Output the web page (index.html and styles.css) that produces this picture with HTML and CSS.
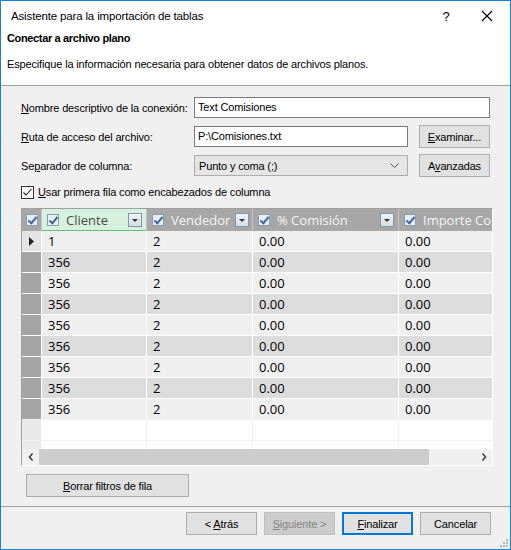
FILE: index.html
```html
<!DOCTYPE html>
<html lang="es">
<head>
    <meta charset="UTF-8">
    <title>Asistente para la importación de tablas</title>
    <link rel="stylesheet" href="styles.css">
</head>
<body>
    <div class="dialog">
        <div class="titlebar">
            <span class="title">Asistente para la importación de tablas</span>
            <span class="help">?</span>
            <span class="close">
                <svg width="12" height="12" viewBox="0 0 12 12"><path d="M1 1L11 11M11 1L1 11" stroke="#000" stroke-width="1.1"/></svg>
            </span>
        </div>
        <div class="header">
            <div class="step">Conectar a archivo plano</div>
            <div class="desc">Especifique la información necesaria para obtener datos de archivos planos.</div>
        </div>

        <div class="content">
            <div class="row">
                <label class="lbl"><u>N</u>ombre descriptivo de la conexión:</label>
                <div class="field wide">Text Comisiones</div>
            </div>
            <div class="row">
                <label class="lbl"><u>R</u>uta de acceso del archivo:</label>
                <div class="field">P:\Comisiones.txt</div>
                <button class="btn side"><u>E</u>xaminar...</button>
            </div>
            <div class="row">
                <label class="lbl">Se<u>p</u>arador de columna:</label>
                <div class="field select">
                    <span>Punto y coma (;)</span>
                    <svg width="9" height="6" viewBox="0 0 9 6"><path d="M0.5 0.5L4.5 4.5L8.5 0.5" fill="none" stroke="#555"/></svg>
                </div>
                <button class="btn side">A<u>v</u>anzadas</button>
            </div>
            <div class="check-row">
                <span class="check">
                    <svg width="13" height="13" viewBox="0 0 13 13"><rect x="0.5" y="0.5" width="12" height="12" fill="#fff" stroke="#333"/><path d="M2.5 6.5L5 9L10.5 3" fill="none" stroke="#222" stroke-width="1.1"/></svg>
                </span>
                <span><u>U</u>sar primera fila como encabezados de columna</span>
            </div>

            <div class="grid" id="grid">
                <div class="ghead">
                    <div class="corner"><span class="mini-check"></span></div>
                    <div class="col active"><span class="mini-check"></span><span class="name">Cliente</span><span class="drop"></span></div>
                    <div class="col"><span class="mini-check"></span><span class="name">Vendedor</span><span class="drop"></span></div>
                    <div class="col"><span class="mini-check"></span><span class="name">% Comisión</span><span class="drop"></span></div>
                    <div class="col last"><span class="mini-check"></span><span class="name">Importe Co</span></div>
                </div>
                <div class="gbody" id="rows"></div>
                <div class="hscroll">
                    <span class="arrow">
                        <svg width="6" height="8" viewBox="0 0 6 8"><path d="M4.5 0.5L1.5 4L4.5 7.5" fill="none" stroke="#333" stroke-width="1.4"/></svg>
                    </span>
                    <div class="track"><div class="thumb"></div></div>
                    <span class="arrow">
                        <svg width="6" height="8" viewBox="0 0 6 8"><path d="M1.5 0.5L4.5 4L1.5 7.5" fill="none" stroke="#333" stroke-width="1.4"/></svg>
                    </span>
                </div>
            </div>

            <button class="btn clear"><u>B</u>orrar filtros de fila</button>
        </div>

        <div class="footer">
            <button class="btn"><span>&lt; <u>A</u>trás</span></button>
            <button class="btn" disabled><u>S</u>iguiente &gt;</button>
            <button class="btn default"><u>F</u>inalizar</button>
            <button class="btn">Cancelar</button>
            <svg class="grip" width="8" height="8" viewBox="0 0 8 8">
                <rect x="6" y="0" width="2" height="2" fill="#b8b8b8"/>
                <rect x="3" y="3" width="2" height="2" fill="#b8b8b8"/>
                <rect x="6" y="3" width="2" height="2" fill="#b8b8b8"/>
                <rect x="0" y="6" width="2" height="2" fill="#b8b8b8"/>
                <rect x="3" y="6" width="2" height="2" fill="#b8b8b8"/>
                <rect x="6" y="6" width="2" height="2" fill="#b8b8b8"/>
            </svg>
        </div>
    </div>

    <script>
        // preview rows of the text file
        const data = [
            ['1', '2', '0.00', '0.00'],
            ['356', '2', '0.00', '0.00'],
            ['356', '2', '0.00', '0.00'],
            ['356', '2', '0.00', '0.00'],
            ['356', '2', '0.00', '0.00'],
            ['356', '2', '0.00', '0.00'],
            ['356', '2', '0.00', '0.00'],
            ['356', '2', '0.00', '0.00'],
            ['356', '2', '0.00', '0.00']
        ];

        const rows = document.getElementById('rows');
        data.forEach((r, i) => {
            const row = document.createElement('div');
            row.className = 'grow' + (i % 2 ? ' alt' : '');
            const head = document.createElement('div');
            head.className = 'rhead' + (i === 0 ? ' current' : '');
            if (i === 0) head.innerHTML = '<svg width="5" height="9" viewBox="0 0 5 9"><path d="M0 0L5 4.5L0 9Z" fill="#222"/></svg>';
            row.appendChild(head);
            r.forEach(v => {
                const cell = document.createElement('div');
                cell.className = 'cell';
                cell.textContent = v;
                row.appendChild(cell);
            });
            rows.appendChild(row);
        });

        // blank rows under the data
        for (let i = 0; i < 2; i++) {
            const row = document.createElement('div');
            row.className = 'grow empty';
            row.innerHTML = '<div class="rhead"></div><div class="cell"></div><div class="cell"></div><div class="cell"></div><div class="cell"></div>';
            rows.appendChild(row);
        }
    </script>
</body>
</html>
```

FILE: styles.css
```css
* {
    box-sizing: border-box;
}

body {
    margin: 0;
    font-family: 'Liberation Sans', Arial, sans-serif;
    font-size: 11px;
    letter-spacing: -0.15px;
    color: #000;
    background: #fff;
}

u {
    text-decoration: underline;
    text-underline-offset: 1px;
}

.dialog {
    width: 511px;
    height: 550px;
    border: 1px solid #1b7fd4;
    background: #f0f0f0;
    display: flex;
    flex-direction: column;
}

.titlebar {
    height: 29px;
    background: #fff;
    display: flex;
    align-items: center;
    padding-left: 10px;
    padding-top: 1px;
}

.title {
    flex: 1;
    font-size: 11.5px;
}

.help {
    width: 30px;
    text-align: center;
    font-size: 13px;
    margin-right: 3px;
}

.close {
    width: 46px;
    height: 28px;
    display: flex;
    align-items: center;
    justify-content: center;
}

.header {
    background: #fff;
    height: 56px;
    border-bottom: 1px solid #a0a0a0;
    padding: 2px 6px 0;
}

.step {
    font-weight: bold;
    letter-spacing: -0.35px;
}

.desc {
    margin-top: 14px;
    font-size: 11px;
}

.content {
    padding: 11px 19px 0 20px;
    flex: 1;
}

.row {
    display: flex;
    align-items: center;
    height: 21px;
    margin-bottom: 8px;
}

.lbl {
    width: 173px;
    flex: none;
    white-space: nowrap;
}

.field {
    height: 21px;
    width: 214px;
    border: 1px solid #7a7a7a;
    background: #fff;
    padding: 3px 3px;
    white-space: nowrap;
}

.field.wide {
    width: 296px;
}

.field.select {
    background: #e5e5e5;
    border-color: #adadad;
    display: flex;
    align-items: center;
    justify-content: space-between;
    padding: 0 8px 0 4px;
}

.btn {
    font-family: inherit;
    font-size: 11px;
    letter-spacing: -0.15px;
    height: 23px;
    width: 71px;
    padding: 0;
    background: #e1e1e1;
    border: 1px solid #adadad;
    color: #000;
}

.btn:disabled {
    background: #cccccc;
    border-color: #bfbfbf;
    color: #838383;
}

.btn.default {
    border: 2px solid #0078d7;
}

.btn.side {
    margin-left: 11px;
}

.check-row {
    display: flex;
    align-items: center;
    gap: 4px;
    height: 16px;
    margin-top: 1px;
}

.check {
    display: flex;
}

.grid {
    margin-top: 8px;
    width: 472px;
    height: 258px;
    border: 1px solid #a0a0a0;
    border-right-color: #fff;
    border-bottom-color: #fff;
    background: #fff;
    overflow: hidden;
    display: flex;
    flex-direction: column;
    font-family: 'Open Sans', 'DejaVu Sans', sans-serif;
    font-size: 13px;
    letter-spacing: 0;
}

.ghead {
    display: flex;
    height: 22px;
    background: #a7a7a7;
    flex: none;
}

.corner {
    width: 20px;
    display: flex;
    align-items: center;
    justify-content: center;
    border-right: 1px solid #c4c4c4;
    flex: none;
}

.col {
    display: flex;
    align-items: center;
    gap: 5px;
    padding: 0 4px 0 5px;
    color: #f4f4f4;
    border-right: 1px solid #c4c4c4;
    flex: none;
    white-space: nowrap;
    overflow: hidden;
}

.col:nth-child(2) { width: 105px; }
.col:nth-child(3) { width: 106px; }
.col:nth-child(4) { width: 146px; }
.col.last { width: 93px; border-right: none; padding-right: 0; }

.col.active {
    background: #d6f1de;
    color: #4a4a4a;
    border-bottom: 1px solid #5dc27e;
}

.col .name {
    flex: 1;
    padding-left: 2px;
}

.mini-check {
    width: 12px;
    height: 12px;
    border: 1px solid #8a9bb0;
    background: #e8eef6;
    position: relative;
    flex: none;
}

.mini-check::after {
    content: "";
    position: absolute;
    left: 3px;
    top: 0;
    width: 3px;
    height: 7px;
    border: solid #3f66a8;
    border-width: 0 2px 2px 0;
    transform: rotate(40deg);
}

.drop {
    width: 14px;
    height: 14px;
    border: 1px solid #8393a8;
    background: linear-gradient(#f1f4f8, #d6dde7);
    position: relative;
    flex: none;
}

.drop::after {
    content: "";
    position: absolute;
    left: 3px;
    top: 5px;
    border-left: 3px solid transparent;
    border-right: 3px solid transparent;
    border-top: 3px solid #333;
}

.gbody {
    flex: 1;
    overflow: hidden;
}

.grow {
    display: flex;
    height: 21px;
    background: #efefef;
    border-top: 1px solid #fff;
}

.grow:first-child {
    border-top: none;
    height: 20px;
}

.grow.alt {
    background: #dcdcdc;
}

.grow.empty {
    background: #fff;
    border-top-color: #f0f0f0;
}

.rhead {
    width: 20px;
    background: #a5a5a5;
    border-right: 1px solid #fff;
    flex: none;
}

.rhead.current {
    background: #e3e3e3;
    display: flex;
    align-items: center;
    justify-content: center;
}

.grow.empty .rhead {
    background: #e9e9e9;
}

.cell {
    padding: 0 5px 0 6px;
    line-height: 20px;
    border-right: 1px solid #fff;
    flex: none;
    color: #000;
}

.grow.empty .cell {
    border-right-color: #f0f0f0;
}

.cell:nth-child(2) { width: 105px; }
.cell:nth-child(3) { width: 106px; }
.cell:nth-child(4) { width: 146px; }
.cell:nth-child(5) { width: 120px; }

.hscroll {
    display: flex;
    align-items: center;
    height: 16px;
    background: #f0f0f0;
    flex: none;
}

.hscroll .arrow {
    width: 17px;
    display: flex;
    justify-content: center;
}

.track {
    flex: 1;
    height: 16px;
}

.thumb {
    width: 390px;
    height: 16px;
    background: #cdcdcd;
}

.clear {
    width: 163px;
    margin: 8px 0 0 5px;
}

.footer {
    height: 43px;
    border-top: 1px solid #a0a0a0;
    display: flex;
    justify-content: flex-end;
    gap: 7px;
    padding: 5px 19px 0 0;
    position: relative;
}

.grip {
    position: absolute;
    right: 2px;
    bottom: 2px;
}
```
